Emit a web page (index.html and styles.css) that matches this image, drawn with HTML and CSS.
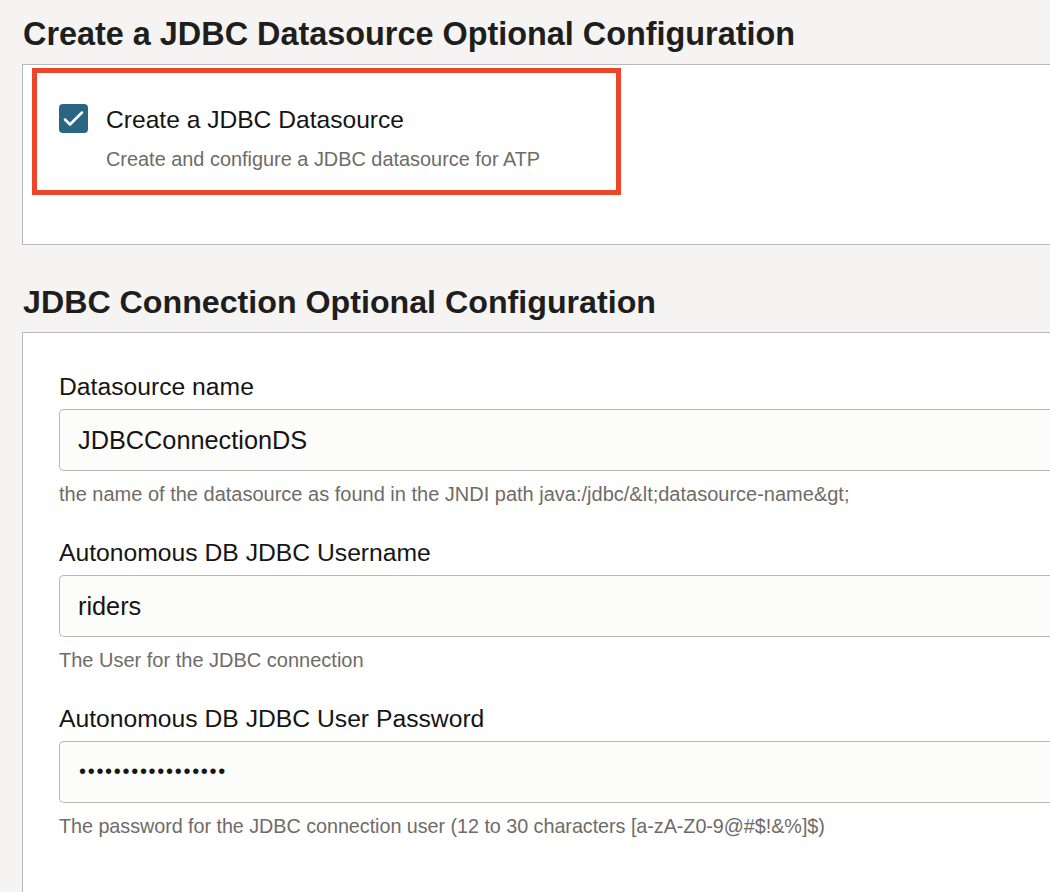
FILE: index.html
```html
<!DOCTYPE html>
<html lang="en">
<head>
<meta charset="utf-8">
<title>JDBC Datasource Configuration</title>
<link rel="stylesheet" href="styles.css">
</head>
<body>
<main class="page">
  <section class="section section-first">
    <h2 class="section-title">Create a JDBC Datasource Optional Configuration</h2>
    <div class="panel panel-datasource">
      <div class="highlight">
        <label class="check-row">
          <span class="checkbox">
            <svg width="29" height="29" viewBox="0 0 29 29" aria-hidden="true">
              <polyline points="6,15.5 11,20.5 23,8.5" fill="none" stroke="#ffffff" stroke-width="2.5" stroke-linecap="round" stroke-linejoin="round"/>
            </svg>
          </span>
          <span class="check-text">
            <span class="check-label">Create a JDBC Datasource</span>
            <span class="check-help">Create and configure a JDBC datasource for ATP</span>
          </span>
        </label>
      </div>
    </div>
  </section>

  <section class="section section-second">
    <h2 class="section-title">JDBC Connection Optional Configuration</h2>
    <div class="panel panel-fields">
      <div class="field">
        <label class="field-label" for="ds">Datasource name</label>
        <input class="field-input" id="ds" type="text" value="JDBCConnectionDS" readonly>
        <div class="field-help">the name of the datasource as found in the JNDI path java:/jdbc/&amp;lt;datasource-name&amp;gt;</div>
      </div>
      <div class="field">
        <label class="field-label" for="user">Autonomous DB JDBC Username</label>
        <input class="field-input" id="user" type="text" value="riders" readonly>
        <div class="field-help">The User for the JDBC connection</div>
      </div>
      <div class="field">
        <label class="field-label" for="pw">Autonomous DB JDBC User Password</label>
        <div class="field-input field-password" id="pw">•••••••••••••••••</div>
        <div class="field-help">The password for the JDBC connection user (12 to 30 characters [a-zA-Z0-9@#$!&amp;%]$)</div>
      </div>
    </div>
  </section>
</main>
</body>
</html>
```

FILE: styles.css
```css
html, body {
  margin: 0;
  padding: 0;
  background: #f5f4f2;
  overflow: hidden;
}

body {
  font-family: "Liberation Sans", Arial, Helvetica, sans-serif;
  color: #161513;
  height: 892px;
}

.page {
  box-sizing: border-box;
  height: 892px;
  padding-left: 22px;
  display: flex;
  flex-direction: column;
}

.section-second {
  flex: 1;
  display: flex;
  flex-direction: column;
  min-height: 0;
}

.section-title {
  margin: 0;
  font-size: 32.4px;
  line-height: 40px;
  font-weight: 700;
  color: #201e1c;
  padding-left: 1px;
  white-space: nowrap;
}

.section-second .section-title {
  font-size: 32.2px;
}

.section-first .section-title {
  margin-top: 14px;
  margin-bottom: 10px;
}

.section-second .section-title {
  margin-top: 37px;
  margin-bottom: 10px;
}

.panel {
  background: #ffffff;
  border: 1px solid #b5b9c1;
  border-right: none;
}

.panel-datasource {
  padding: 3px 0 49px 9px;
}

.highlight {
  box-sizing: border-box;
  width: 589px;
  height: 127px;
  border: 5px solid #ec4527;
  padding: 31px 0 0 22px;
}

.check-row {
  display: flex;
  align-items: flex-start;
  gap: 18px;
}

.checkbox {
  flex: none;
  width: 29px;
  height: 29px;
  border-radius: 4px;
  background: #2a6584;
  display: flex;
}

.check-text {
  display: flex;
  flex-direction: column;
}

.check-label {
  font-size: 24.6px;
  line-height: 30px;
  margin-top: 1px;
  color: #161513;
  white-space: nowrap;
}

.check-help {
  margin-top: 12px;
  font-size: 19.9px;
  line-height: 24px;
  color: #6f6b67;
  white-space: nowrap;
}

.panel-fields {
  flex: 1;
  min-height: 0;
  overflow: hidden;
  border-bottom: none;
  padding: 40px 0 0 36px;
}

.field {
  display: flex;
  flex-direction: column;
  margin-bottom: 33px;
}

.field-label {
  font-size: 24.7px;
  line-height: 28px;
  color: #161513;
  white-space: nowrap;
}

.field-input {
  box-sizing: border-box;
  margin-top: 8px;
  height: 62px;
  width: 100%;
  border: 1px solid #bcb7b1;
  border-right: none;
  border-radius: 5px 0 0 5px;
  background: #fcfcfb;
  padding: 0 0 0 18px;
  font-family: "Liberation Sans", Arial, Helvetica, sans-serif;
  font-size: 25.3px;
  color: #161513;
  outline: none;
}

.field-password {
  display: flex;
  align-items: center;
  font-size: 20px;
  letter-spacing: 1.7px;
  padding-left: 19px;
  padding-bottom: 2px;
}

.field-help {
  margin-top: 11px;
  font-size: 20px;
  line-height: 24px;
  color: #6f6b67;
  white-space: nowrap;
}

.field:last-child .field-help {
  font-size: 19.8px;
  letter-spacing: -0.05px;
}
```
